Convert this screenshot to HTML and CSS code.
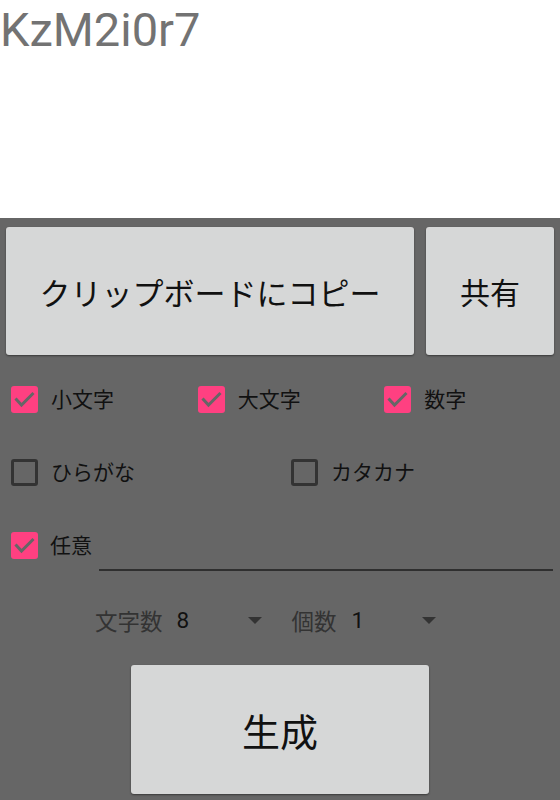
FILE: index.html
```html
<!DOCTYPE html>
<html lang="ja">
<head>
<meta charset="utf-8">
<link rel="stylesheet" href="styles.css">
</head>
<body>
<div class="result">KzM2i0r7</div>
<div class="panel">
  <div class="top-buttons">
    <button class="btn btn-copy">クリップボードにコピー</button>
    <button class="btn btn-share">共有</button>
  </div>
  <div class="row row3">
    <label class="cb"><span class="box on"><svg viewBox="0 0 27 27"><polyline points="4.5,12.5 10.5,19 22.5,7" /></svg></span><span class="lbl">小文字</span></label>
    <label class="cb"><span class="box on"><svg viewBox="0 0 27 27"><polyline points="4.5,12.5 10.5,19 22.5,7" /></svg></span><span class="lbl">大文字</span></label>
    <label class="cb"><span class="box on"><svg viewBox="0 0 27 27"><polyline points="4.5,12.5 10.5,19 22.5,7" /></svg></span><span class="lbl">数字</span></label>
  </div>
  <div class="row row2">
    <label class="cb"><span class="box"></span><span class="lbl">ひらがな</span></label>
    <label class="cb"><span class="box"></span><span class="lbl">カタカナ</span></label>
  </div>
  <div class="row row-custom">
    <label class="cb"><span class="box on"><svg viewBox="0 0 27 27"><polyline points="4.5,12.5 10.5,19 22.5,7" /></svg></span><span class="lbl">任意</span></label>
    <div class="input"></div>
  </div>
  <div class="spinners">
    <div class="sp sp1">
      <span class="sp-lbl">文字数</span>
      <span class="sp-box"><span class="sp-val">8</span><span class="arrow"></span></span>
    </div>
    <div class="sp sp2">
      <span class="sp-lbl">個数</span>
      <span class="sp-box"><span class="sp-val">1</span><span class="arrow"></span></span>
    </div>
  </div>
  <div class="gen-row">
    <button class="btn btn-gen">生成</button>
  </div>
</div>
</body>
</html>
```

FILE: styles.css
```css
html, body {
  margin: 0;
  padding: 0;
  height: 800px;
  overflow: hidden;
  background: #ffffff;
  font-family: Roboto, "Noto Sans CJK JP", sans-serif;
}

.result {
  height: 218px;
  box-sizing: border-box;
  padding-top: 3px;
  font-size: 47px;
  line-height: 54px;
  color: #737373;
}

.panel {
  background: #666666;
  height: 582px;
  box-sizing: border-box;
  padding-top: 9px;
}

.top-buttons {
  display: flex;
  gap: 12px;
  padding: 0 6px;
  height: 128px;
}

.btn {
  border: none;
  background: #d6d7d7;
  border-radius: 3px;
  box-shadow: 0 1px 2px rgba(0, 0, 0, 0.45);
  font-family: Roboto, "Noto Sans CJK JP", sans-serif;
  color: #111111;
  padding: 0;
  margin: 0;
}

.btn-copy {
  flex: 1;
  font-size: 31px;
}

.btn-share {
  width: 128px;
  font-size: 30px;
}

.row {
  display: grid;
  height: 73px;
  align-items: center;
}

.row3 {
  margin-top: 8px;
  grid-template-columns: 1fr 1fr 1fr;
}

.row2 {
  grid-template-columns: 1fr 1fr;
}

.cb {
  display: flex;
  align-items: center;
  padding-left: 11px;
}

.box {
  width: 27px;
  height: 27px;
  box-sizing: border-box;
  border: 3px solid #333333;
  border-radius: 3px;
  display: block;
}

.box.on {
  background: #ff4081;
  border: none;
}

.box svg {
  width: 27px;
  height: 27px;
  display: block;
}

.box svg polyline {
  fill: none;
  stroke: #666666;
  stroke-width: 3;
}

.lbl {
  margin-left: 13px;
  font-size: 21px;
  color: #111111;
  line-height: 28px;
}

.row-custom {
  display: flex;
  align-items: center;
  height: 73px;
}

.row-custom .lbl {
  margin-left: 12px;
}

.input {
  flex: 1;
  margin-left: 7px;
  margin-right: 7px;
  align-self: flex-start;
  margin-top: 60px;
  height: 2px;
  background: #2f2f2f;
}

.spinners {
  display: flex;
  align-items: center;
  height: 76px;
  padding-left: 95px;
}

.sp {
  display: flex;
  align-items: center;
}

.sp2 {
  margin-left: 30px;
}

.sp-lbl {
  font-size: 22.5px;
  color: #333333;
}

.sp-box {
  display: flex;
  align-items: center;
  justify-content: space-between;
}

.sp1 .sp-box {
  margin-left: 14px;
  width: 85px;
}

.sp2 .sp-box {
  margin-left: 15px;
  width: 84px;
}

.sp-val {
  font-size: 22.5px;
  color: #111111;
}

.arrow {
  width: 0;
  height: 0;
  border-left: 7.5px solid transparent;
  border-right: 7.5px solid transparent;
  border-top: 7px solid #333333;
  margin-top: 1px;
}

.gen-row {
  display: flex;
  justify-content: center;
  margin-top: 7px;
}

.btn-gen {
  width: 298px;
  height: 129px;
  font-size: 38px;
}
```
